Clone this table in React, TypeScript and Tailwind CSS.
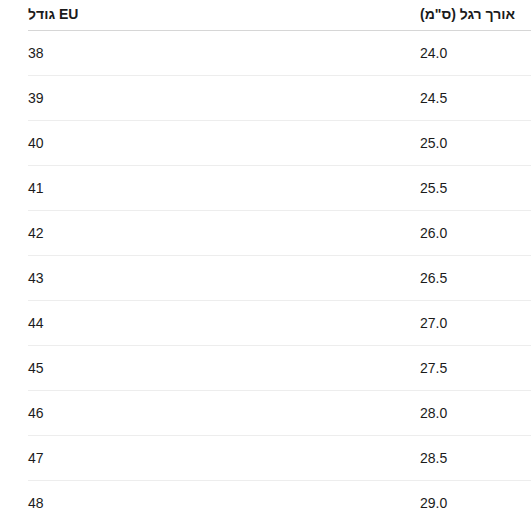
const rows: [number, string][] = [
  [38, "24.0"],
  [39, "24.5"],
  [40, "25.0"],
  [41, "25.5"],
  [42, "26.0"],
  [43, "26.5"],
  [44, "27.0"],
  [45, "27.5"],
  [46, "28.0"],
  [47, "28.5"],
  [48, "29.0"],
];

export default function App() {
  return (
    <div
      className="h-[526px] w-[531px] overflow-hidden bg-white pl-[28px] text-[#1b1b1b]"
      style={{ fontFamily: '"Liberation Sans", "DejaVu Sans", sans-serif' }}
    >
      <table className="w-[784px] table-fixed border-collapse text-left text-[14px] leading-5">
        <thead>
          <tr className="border-b border-[#d6d6d6]">
            <th className="w-[392px] pt-[4px] pb-[6px] font-semibold">גודל EU</th>
            <th className="w-[392px] pt-[4px] pb-[6px] font-semibold">אורך רגל (ס"מ)</th>
          </tr>
        </thead>
        <tbody>
          {rows.map(([eu, cm]) => (
            <tr key={eu} className="border-b border-[#ededed] last:border-b-0">
              <td className="py-3 font-normal">{eu}</td>
              <td className="py-3 font-normal">{cm}</td>
            </tr>
          ))}
        </tbody>
      </table>
    </div>
  );
}
